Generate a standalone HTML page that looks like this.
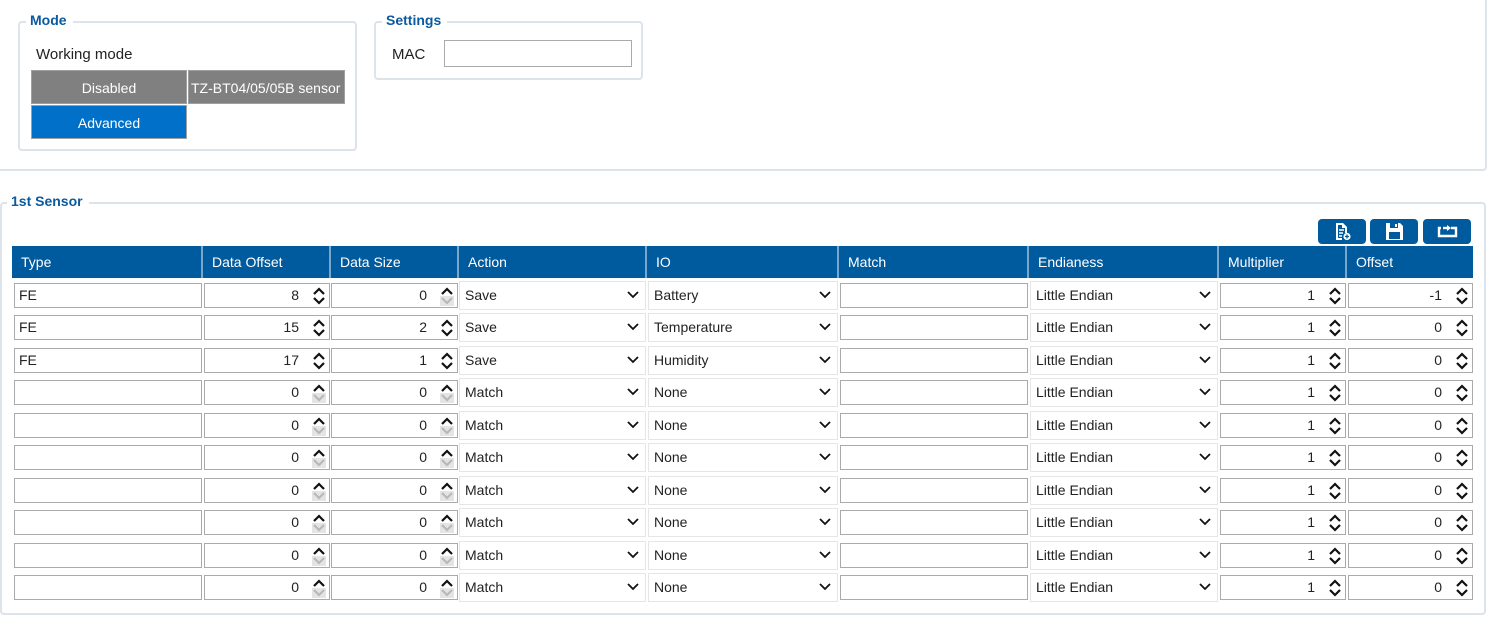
<!DOCTYPE html>
<html><head><meta charset="utf-8"><style>
*{box-sizing:border-box;margin:0;padding:0}
body{width:1499px;height:631px;background:#fff;font-family:"Liberation Sans",sans-serif;font-size:14px;color:#222;position:relative;overflow:hidden}
.abs{position:absolute}
.panel{position:absolute;border:2px solid #dde3ea;border-radius:4px}
.legend{position:absolute;background:#fff;color:#0a5aa0;font-weight:bold;font-size:14px;padding:0 6px 0 4px;line-height:16px}
.btn{position:absolute;color:#fff;text-align:center;font-size:14px;line-height:30px;border:1px solid #a0a0a0}
.hdr{position:absolute;top:246px;height:32px;background:#005a9e;color:#fff;line-height:32px;padding-left:9px;border-right:2px solid #7aa6cc}
.row{position:absolute;left:0;width:1499px;height:30px}
.in{position:absolute;top:1px;height:25px;border:1px solid #aaa;background:#fff;line-height:23px;padding-left:4px}
.num{text-align:right;padding-right:30px}
.sel{position:absolute;top:-1px;height:29px;border:1px solid #e6e6e6;line-height:27px;padding-left:5px}
.sp{position:absolute;right:3px;top:2px;width:14px;height:20px}
.c1{left:14px;width:188px}.c2{left:204px;width:126px}.c3{left:331px;width:127px}
.c4{left:459px;width:187px}.c5{left:648px;width:190px}.c6{left:840px;width:188px}
.c7{left:1030px;width:188px}.c8{left:1220px;width:126px}.c9{left:1348px;width:125px}
.dd{position:absolute;right:6px;top:9px}
.tb{position:absolute;top:219px;height:25px;width:48px;background:#005a9e;border-radius:4px}
</style></head><body>
<svg width="0" height="0" style="position:absolute"><defs>
<symbol id="sp" viewBox="0 0 14 20"><path d="M2 8 L7 3 L12 8" fill="none" stroke="#111" stroke-width="2.2"/><path d="M2 12 L7 17 L12 12" fill="none" stroke="#111" stroke-width="2.2"/></symbol>
<symbol id="spg" viewBox="0 0 14 20"><rect x="-1" y="10" width="16" height="11" fill="#e4e4e4"/><path d="M2 8 L7 3 L12 8" fill="none" stroke="#111" stroke-width="2.2"/><path d="M2 12 L7 17 L12 12" fill="none" stroke="#b8b8b8" stroke-width="2.2"/></symbol>
<symbol id="dd" viewBox="0 0 12 8"><path d="M1 1 L6 6 L11 1" fill="none" stroke="#111" stroke-width="1.8"/></symbol>
</defs></svg>

<div class="panel" style="left:-4px;top:-4px;width:1491px;height:175px"></div>
<div class="panel" style="left:18px;top:21px;width:339px;height:130px"></div>
<div class="legend" style="left:26px;top:12px">Mode</div>
<div class="abs" style="left:36px;top:46px;font-size:15px">Working mode</div>
<div class="btn" style="left:31px;top:70px;width:156px;height:34px;background:#808080;line-height:34px">Disabled</div>
<div class="btn" style="left:188px;top:70px;width:157px;height:34px;background:#808080;line-height:34px;white-space:nowrap;overflow:hidden;text-align:left;padding-left:2px">TZ-BT04/05/05B sensor</div>
<div class="btn" style="left:31px;top:105px;width:156px;height:34px;background:#0070c8;line-height:34px">Advanced</div>

<div class="panel" style="left:374px;top:21px;width:269px;height:59px"></div>
<div class="legend" style="left:382px;top:12px">Settings</div>
<div class="abs" style="left:392px;top:46px;font-size:15px">MAC</div>
<div class="abs" style="left:444px;top:40px;width:188px;height:27px;border:1px solid #aaa"></div>

<div class="panel" style="left:0px;top:202px;width:1486px;height:413px"></div>
<div class="legend" style="left:7px;top:193px">1st Sensor</div>

<div class="tb" style="left:1318px"><svg class="abs" style="left:17px;top:3px" width="16" height="19" viewBox="0 0 16 19"><path d="M1 1h7l4 4v6h-2V6H7V3H3v13h4v2H1z" fill="#fff"/><path d="M4 8h5M4 11h4M4 14h3" stroke="#fff" stroke-width="1.5"/><circle cx="12" cy="14.5" r="3.6" fill="#fff"/><path d="M12 12.5v4M10 14.5h4" stroke="#005a9e" stroke-width="1.3"/></svg></div>
<div class="tb" style="left:1370px"><svg class="abs" style="left:15px;top:3px" width="19" height="19" viewBox="0 0 19 19"><path d="M1 1h14l3 3v14H1z" fill="#fff"/><rect x="5" y="1" width="8" height="5" fill="#005a9e"/><rect x="10" y="2" width="2" height="3" fill="#fff"/><rect x="4" y="10" width="11" height="7" fill="#005a9e"/></svg></div>
<div class="tb" style="left:1423px"><svg class="abs" style="left:14px;top:5px" width="21" height="14" viewBox="0 0 21 14"><path d="M4 4H2v8h17V4h-5" fill="none" stroke="#fff" stroke-width="2.4"/><path d="M6 4h6" stroke="#fff" stroke-width="2.4"/><path d="M10 1l4 3-4 3z" fill="#fff"/></svg></div>

<div class="hdr" style="left:12px;width:191px">Type</div>
<div class="hdr" style="left:203px;width:128px">Data Offset</div>
<div class="hdr" style="left:331px;width:128px">Data Size</div>
<div class="hdr" style="left:459px;width:188px">Action</div>
<div class="hdr" style="left:647px;width:192px">IO</div>
<div class="hdr" style="left:839px;width:190px">Match</div>
<div class="hdr" style="left:1029px;width:190px">Endianess</div>
<div class="hdr" style="left:1219px;width:128px">Multiplier</div>
<div class="hdr" style="left:1347px;width:126px;border-right:none">Offset</div>

<div class="row" style="top:282px"><div class="in c1">FE</div><div class="in num c2">8<svg class="sp"><use href="#sp"/></svg></div><div class="in num c3">0<svg class="sp"><use href="#spg"/></svg></div><div class="sel c4">Save<svg class="dd" width="12" height="8"><use href="#dd"/></svg></div><div class="sel c5">Battery<svg class="dd" width="12" height="8"><use href="#dd"/></svg></div><div class="in c6"></div><div class="sel c7">Little Endian<svg class="dd" width="12" height="8"><use href="#dd"/></svg></div><div class="in num c8">1<svg class="sp"><use href="#sp"/></svg></div><div class="in num c9">-1<svg class="sp"><use href="#sp"/></svg></div></div>
<div class="row" style="top:314px"><div class="in c1">FE</div><div class="in num c2">15<svg class="sp"><use href="#sp"/></svg></div><div class="in num c3">2<svg class="sp"><use href="#sp"/></svg></div><div class="sel c4">Save<svg class="dd" width="12" height="8"><use href="#dd"/></svg></div><div class="sel c5">Temperature<svg class="dd" width="12" height="8"><use href="#dd"/></svg></div><div class="in c6"></div><div class="sel c7">Little Endian<svg class="dd" width="12" height="8"><use href="#dd"/></svg></div><div class="in num c8">1<svg class="sp"><use href="#sp"/></svg></div><div class="in num c9">0<svg class="sp"><use href="#sp"/></svg></div></div>
<div class="row" style="top:347px"><div class="in c1">FE</div><div class="in num c2">17<svg class="sp"><use href="#sp"/></svg></div><div class="in num c3">1<svg class="sp"><use href="#sp"/></svg></div><div class="sel c4">Save<svg class="dd" width="12" height="8"><use href="#dd"/></svg></div><div class="sel c5">Humidity<svg class="dd" width="12" height="8"><use href="#dd"/></svg></div><div class="in c6"></div><div class="sel c7">Little Endian<svg class="dd" width="12" height="8"><use href="#dd"/></svg></div><div class="in num c8">1<svg class="sp"><use href="#sp"/></svg></div><div class="in num c9">0<svg class="sp"><use href="#sp"/></svg></div></div>
<div class="row" style="top:379px"><div class="in c1"></div><div class="in num c2">0<svg class="sp"><use href="#spg"/></svg></div><div class="in num c3">0<svg class="sp"><use href="#spg"/></svg></div><div class="sel c4">Match<svg class="dd" width="12" height="8"><use href="#dd"/></svg></div><div class="sel c5">None<svg class="dd" width="12" height="8"><use href="#dd"/></svg></div><div class="in c6"></div><div class="sel c7">Little Endian<svg class="dd" width="12" height="8"><use href="#dd"/></svg></div><div class="in num c8">1<svg class="sp"><use href="#sp"/></svg></div><div class="in num c9">0<svg class="sp"><use href="#sp"/></svg></div></div>
<div class="row" style="top:412px"><div class="in c1"></div><div class="in num c2">0<svg class="sp"><use href="#spg"/></svg></div><div class="in num c3">0<svg class="sp"><use href="#spg"/></svg></div><div class="sel c4">Match<svg class="dd" width="12" height="8"><use href="#dd"/></svg></div><div class="sel c5">None<svg class="dd" width="12" height="8"><use href="#dd"/></svg></div><div class="in c6"></div><div class="sel c7">Little Endian<svg class="dd" width="12" height="8"><use href="#dd"/></svg></div><div class="in num c8">1<svg class="sp"><use href="#sp"/></svg></div><div class="in num c9">0<svg class="sp"><use href="#sp"/></svg></div></div>
<div class="row" style="top:444px"><div class="in c1"></div><div class="in num c2">0<svg class="sp"><use href="#spg"/></svg></div><div class="in num c3">0<svg class="sp"><use href="#spg"/></svg></div><div class="sel c4">Match<svg class="dd" width="12" height="8"><use href="#dd"/></svg></div><div class="sel c5">None<svg class="dd" width="12" height="8"><use href="#dd"/></svg></div><div class="in c6"></div><div class="sel c7">Little Endian<svg class="dd" width="12" height="8"><use href="#dd"/></svg></div><div class="in num c8">1<svg class="sp"><use href="#sp"/></svg></div><div class="in num c9">0<svg class="sp"><use href="#sp"/></svg></div></div>
<div class="row" style="top:477px"><div class="in c1"></div><div class="in num c2">0<svg class="sp"><use href="#spg"/></svg></div><div class="in num c3">0<svg class="sp"><use href="#spg"/></svg></div><div class="sel c4">Match<svg class="dd" width="12" height="8"><use href="#dd"/></svg></div><div class="sel c5">None<svg class="dd" width="12" height="8"><use href="#dd"/></svg></div><div class="in c6"></div><div class="sel c7">Little Endian<svg class="dd" width="12" height="8"><use href="#dd"/></svg></div><div class="in num c8">1<svg class="sp"><use href="#sp"/></svg></div><div class="in num c9">0<svg class="sp"><use href="#sp"/></svg></div></div>
<div class="row" style="top:509px"><div class="in c1"></div><div class="in num c2">0<svg class="sp"><use href="#spg"/></svg></div><div class="in num c3">0<svg class="sp"><use href="#spg"/></svg></div><div class="sel c4">Match<svg class="dd" width="12" height="8"><use href="#dd"/></svg></div><div class="sel c5">None<svg class="dd" width="12" height="8"><use href="#dd"/></svg></div><div class="in c6"></div><div class="sel c7">Little Endian<svg class="dd" width="12" height="8"><use href="#dd"/></svg></div><div class="in num c8">1<svg class="sp"><use href="#sp"/></svg></div><div class="in num c9">0<svg class="sp"><use href="#sp"/></svg></div></div>
<div class="row" style="top:542px"><div class="in c1"></div><div class="in num c2">0<svg class="sp"><use href="#spg"/></svg></div><div class="in num c3">0<svg class="sp"><use href="#spg"/></svg></div><div class="sel c4">Match<svg class="dd" width="12" height="8"><use href="#dd"/></svg></div><div class="sel c5">None<svg class="dd" width="12" height="8"><use href="#dd"/></svg></div><div class="in c6"></div><div class="sel c7">Little Endian<svg class="dd" width="12" height="8"><use href="#dd"/></svg></div><div class="in num c8">1<svg class="sp"><use href="#sp"/></svg></div><div class="in num c9">0<svg class="sp"><use href="#sp"/></svg></div></div>
<div class="row" style="top:574px"><div class="in c1"></div><div class="in num c2">0<svg class="sp"><use href="#spg"/></svg></div><div class="in num c3">0<svg class="sp"><use href="#spg"/></svg></div><div class="sel c4">Match<svg class="dd" width="12" height="8"><use href="#dd"/></svg></div><div class="sel c5">None<svg class="dd" width="12" height="8"><use href="#dd"/></svg></div><div class="in c6"></div><div class="sel c7">Little Endian<svg class="dd" width="12" height="8"><use href="#dd"/></svg></div><div class="in num c8">1<svg class="sp"><use href="#sp"/></svg></div><div class="in num c9">0<svg class="sp"><use href="#sp"/></svg></div></div>
</body></html>
